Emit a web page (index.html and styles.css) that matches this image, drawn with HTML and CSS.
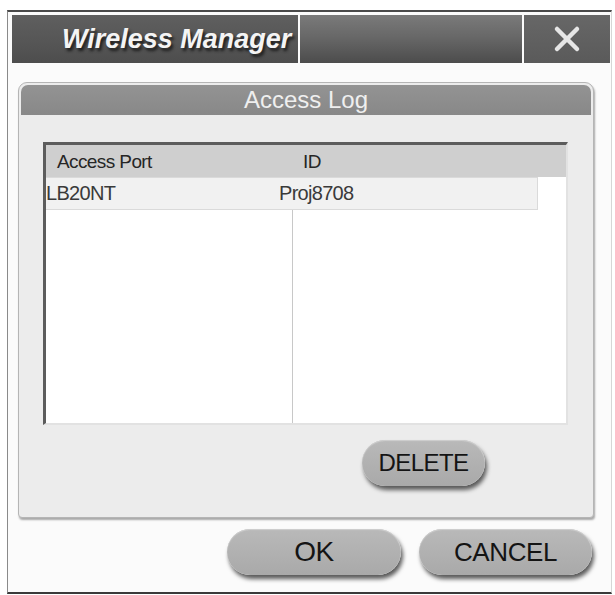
FILE: index.html
```html
<!DOCTYPE html>
<html lang="en">
<head>
    <meta charset="UTF-8">
    <meta name="viewport" content="width=device-width, initial-scale=1.0">
    <title>Wireless Manager</title>
    <link rel="stylesheet" href="styles.css">
</head>
<body>
    <div class="window">
        <div class="titlebar">
            <div class="title">Wireless Manager</div>
            <div class="title-fill"></div>
            <button class="close-btn" aria-label="Close">
                <svg width="30" height="30" viewBox="0 0 30 30">
                    <path d="M5 5 L25 25 M25 5 L5 25" stroke="#e6e6e6" stroke-width="4.5" stroke-linecap="round"/>
                </svg>
            </button>
        </div>

        <div class="panel">
            <div class="panel-header">Access Log</div>

            <div class="log-list">
                <div class="log-head">
                    <span class="col-port">Access Port</span>
                    <span class="col-id">ID</span>
                </div>
                <div class="log-body">
                    <div class="divider"></div>
                    <div class="log-row">
                        <span class="col-port">LB20NT</span>
                        <span class="col-id">Proj8708</span>
                    </div>
                </div>
            </div>

            <div class="panel-actions">
                <button class="pill delete-btn">DELETE</button>
            </div>
        </div>

        <div class="dialog-actions">
            <button class="pill big-btn ok-btn">OK</button>
            <button class="pill big-btn">CANCEL</button>
        </div>
    </div>
</body>
</html>
```

FILE: styles.css
```css
* {
    margin: 0;
    padding: 0;
    box-sizing: border-box;
    font-family: 'Liberation Sans', Arial, sans-serif;
}

body {
    background-color: #ffffff;
    width: 615px;
    height: 595px;
    overflow: hidden;
}

.window {
    margin: 10px 3px 0 7px;
    height: 584px;
    background-color: #fbfbfb;
    border-top: 2px solid #4a4a4a;
    border-left: 1px solid #8a8a8a;
    border-right: 1px solid #d6d6d6;
    border-bottom: 2px solid #3a3a3a;
    padding: 3px 1px 0 4px;
}

/* title bar: caption, empty filler, close box */
.titlebar {
    display: flex;
    height: 48px;
    gap: 2px;
}

.title {
    width: 286px;
    background: linear-gradient(#5f5f5f, #555555 60%, #4d4d4d);
    color: #f4f4f4;
    font-size: 27px;
    font-weight: bold;
    font-style: italic;
    line-height: 48px;
    padding-left: 50px;
    text-shadow: 2px 3px 3px #1e1e1e;
}

.title-fill {
    width: 222px;
    background: linear-gradient(#7a7a7a, #686868 45%, #4c4c4c);
}

.close-btn {
    flex: 1;
    border: none;
    background: linear-gradient(#676767, #5a5a5a);
    display: flex;
    align-items: center;
    justify-content: center;
}

/* access log group box */
.panel {
    margin: 19px 16px 0 6px;
    height: 436px;
    background-color: #ececec;
    border: 1px solid #b5b5b5;
    border-radius: 9px 9px 4px 4px;
    box-shadow: 1px 2px 2px #a8a8a8;
    padding: 2px 2px 0 2px;
}

.panel-header {
    height: 30px;
    background: linear-gradient(#939393, #888888);
    border-radius: 7px 7px 0 0;
    color: #efefef;
    font-size: 24px;
    line-height: 30px;
    text-align: center;
}

.log-list {
    margin: 27px 23px 0 22px;
    height: 283px;
    background-color: #ffffff;
    border-top: 3px solid #5c5c5c;
    border-left: 3px solid #5c5c5c;
    border-right: 2px solid #e2e2e2;
    border-bottom: 2px solid #e2e2e2;
    display: flex;
    flex-direction: column;
}

.log-head {
    display: flex;
    height: 32px;
    background-color: #cfcfcf;
    color: #262626;
    font-size: 19px;
    line-height: 34px;
    letter-spacing: -0.6px;
}

.log-head .col-port {
    width: 248px;
    padding-left: 11px;
}

.log-head .col-id {
    padding-left: 9px;
}

.log-body {
    flex: 1;
    position: relative;
}

.divider {
    position: absolute;
    left: 246px;
    top: 0;
    bottom: 0;
    border-left: 1px solid #c8c8c8;
}

.log-row {
    position: relative;
    display: flex;
    width: 492px;
    height: 33px;
    background-color: #f1f1f1;
    border: 1px solid #dadada;
    border-left: none;
    color: #3a3a3a;
    font-size: 20px;
    line-height: 31px;
    letter-spacing: -0.7px;
}

.log-row .col-port {
    width: 233px;
}

.panel-actions {
    display: flex;
    justify-content: flex-end;
    padding: 15px 106px 0 0;
}

/* rounded grey buttons */
.pill {
    border: none;
    border-radius: 24px;
    background: linear-gradient(#b9b9b9, #a9a9a9);
    box-shadow: 2px 4px 4px #5a5a5a, inset 0 1px 1px #d0d0d0;
    color: #141414;
    cursor: pointer;
}

.delete-btn {
    width: 123px;
    height: 46px;
    font-size: 24px;
    letter-spacing: -0.6px;
}

.dialog-actions {
    display: flex;
    justify-content: flex-end;
    gap: 18px;
    padding: 11px 18px 0 0;
}

.big-btn {
    width: 173px;
    height: 46px;
    font-size: 26px;
    letter-spacing: -0.4px;
}

.ok-btn {
    width: 174px;
    font-size: 28px;
}
```
